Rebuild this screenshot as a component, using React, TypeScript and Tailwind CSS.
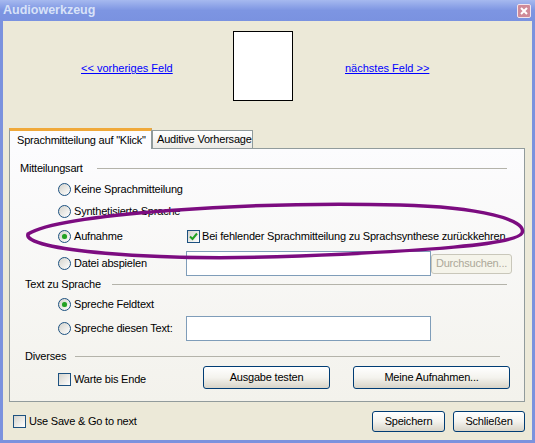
import React from "react";

const font = { fontFamily: '"Liberation Sans", Arial, sans-serif' };

function Radio({ checked }: { checked?: boolean }) {
  return (
    <span className="flex h-[13px] w-[13px] shrink-0 items-center justify-center rounded-full border border-[#1c5180] bg-linear-to-br from-[#d4d3cc] to-white">
      {checked && (
        <span className="h-[5px] w-[5px] rounded-full bg-[#22a022] shadow-[0_0_1px_#7ad27a]" />
      )}
    </span>
  );
}

function Checkbox({ checked }: { checked?: boolean }) {
  return (
    <span className="flex h-[13px] w-[13px] shrink-0 items-center justify-center border border-[#1c5180] bg-linear-to-br from-[#d4d3cc] to-white">
      {checked && (
        <svg width="9" height="9" viewBox="0 0 9 9">
          <path d="M1 4.5 L3.5 7 L8 1.5" fill="none" stroke="#21a121" strokeWidth="2" />
        </svg>
      )}
    </span>
  );
}

function Button({ label, className }: { label: string; className: string }) {
  return (
    <div
      className={`flex items-center justify-center rounded-[3px] border border-[#003c74] bg-linear-to-b from-white via-[#f4f3ee] to-[#d8d4c8] text-[11px] text-black ${className}`}
    >
      {label}
    </div>
  );
}

function GroupHeader({ label, labelClass, lineClass }: { label: string; labelClass: string; lineClass: string }) {
  return (
    <div className="flex items-center">
      <div className={`shrink-0 ${labelClass}`}>{label}</div>
      <div className={`h-px bg-[#b4b3aa] ${lineClass}`} />
    </div>
  );
}

export default function App() {
  return (
    <div
      className="relative h-[443px] w-[535px] overflow-hidden whitespace-nowrap bg-[#7b92de] text-[11px] tracking-[-0.2px] text-black"
      style={font}
    >
      {/* title bar */}
      <div className="flex h-[21px] items-center justify-between bg-linear-to-b from-[#a6b9ef] via-[#7d95e2] to-[#7a92e0] pl-[3px] pr-[4px]">
        <span className="text-[12.5px] font-bold tracking-[0px] text-[#d8e2f8]">Audiowerkzeug</span>
        <span className="flex h-[14px] w-[14px] items-center justify-center rounded-[2px] border border-[#f2e4ec] bg-[#cf8a98]">
          <svg width="8" height="8" viewBox="0 0 8 8">
            <path d="M1 1 L7 7 M7 1 L1 7" stroke="white" strokeWidth="2" />
          </svg>
        </span>
      </div>

      {/* client area */}
      <div className="mx-[3px] flex h-[419px] flex-col bg-[#ece9d8]">
        {/* navigation */}
        <div className="flex h-[107px] pt-[10px]">
          <div className="flex h-[70px] w-[230px] items-center pl-[78px] pt-[5px]">
            <span className="tracking-[0px] text-[#0000ff] underline">&lt;&lt; vorheriges Feld</span>
          </div>
          <div className="h-[70px] w-[60px] border border-black bg-white" />
          <div className="flex h-[70px] items-center pl-[52px] pt-[5px]">
            <span className="tracking-[0px] text-[#0000ff] underline">nächstes Feld &gt;&gt;</span>
          </div>
        </div>

        {/* tabs */}
        <div className="ml-[6px] flex h-[20px] items-end">
          <div className="relative z-10 -mb-px flex h-[21px] w-[143px] items-start border-x border-[#919b9c] border-t-[3px] border-t-[#f0a93a] bg-[#fcfcfe] pl-[7px] pt-[1px]">
            Sprachmitteilung auf "Klick"
          </div>
          <div className="flex h-[18px] w-[101px] items-center border border-b-0 border-[#919b9c] bg-linear-to-b from-white to-[#ecebe6] pl-[4px]">
            Auditive Vorhersage
          </div>
        </div>

        {/* panel */}
        <div className="ml-[6px] flex h-[254px] w-[516px] flex-col border border-[#919b9c] bg-linear-to-b from-[#fcfcfe] to-[#f3f2ec]">
          <div className="mt-[9px] flex h-[20px] items-center">
            <GroupHeader label="Mitteilungsart" labelClass="w-[77px] pl-[10px] box-content" lineClass="w-[410px]" />
          </div>

          <div className="flex h-[22px] items-center pl-[48px]">
            <Radio />
            <span className="ml-[3px]">Keine Sprachmitteilung</span>
          </div>
          <div className="flex h-[22px] items-center pl-[48px]">
            <Radio />
            <span className="ml-[3px]">Synthetisierte Sprache</span>
          </div>
          <div className="flex h-[28px] items-center pl-[48px]">
            <div className="flex w-[129px] items-center">
              <Radio checked />
              <span className="ml-[3px]">Aufnahme</span>
            </div>
            <Checkbox checked />
            <span className="ml-[2px]">Bei fehlender Sprachmitteilung zu Sprachsynthese zurückkehren</span>
          </div>
          <div className="flex h-[27px] items-center pl-[48px]">
            <div className="flex w-[128px] items-center">
              <Radio />
              <span className="ml-[3px]">Datei abspielen</span>
            </div>
            <div className="h-[25px] w-[245px] border border-[#7f9db9] bg-white" />
            <div className="flex h-[20px] w-[81px] items-center justify-center rounded-[3px] border border-[#c9c7ba] bg-[#f5f4ea] text-[#aca899]">
              Durchsuchen...
            </div>
          </div>

          <div className="flex h-[15px] items-center">
            <GroupHeader label="Text zu Sprache" labelClass="w-[87px] pl-[15px] box-content" lineClass="w-[395px]" />
          </div>
          <div className="flex h-[24px] items-center pl-[48px]">
            <Radio checked />
            <span className="ml-[3px]">Spreche Feldtext</span>
          </div>
          <div className="flex h-[24px] items-center pl-[48px]">
            <div className="flex w-[128px] items-center">
              <Radio />
              <span className="ml-[3px]">Spreche diesen Text:</span>
            </div>
            <div className="h-[25px] w-[245px] border border-[#7f9db9] bg-white" />
          </div>

          <div className="mt-[6px] flex h-[20px] items-center">
            <GroupHeader label="Diverses" labelClass="w-[50px] pl-[15px] box-content" lineClass="w-[425px]" />
          </div>
          <div className="flex h-[23px] items-center pl-[48px]">
            <div className="flex w-[145px] items-center pt-[3px]">
              <Checkbox />
              <span className="ml-[3px]">Warte bis Ende</span>
            </div>
            <Button label="Ausgabe testen" className="h-[23px] w-[127px]" />
            <Button label="Meine Aufnahmen..." className="ml-[23px] h-[23px] w-[157px]" />
          </div>
        </div>

        {/* footer */}
        <div className="mt-[9px] flex h-[21px] items-center pl-[10px] pr-[7px]">
          <Checkbox />
          <span className="ml-[3px]">Use Save &amp; Go to next</span>
          <Button label="Speichern" className="ml-auto h-[21px] w-[73px]" />
          <Button label="Schließen" className="ml-[8px] h-[21px] w-[72px]" />
        </div>
      </div>

      {/* hand-drawn highlight */}
      <svg className="pointer-events-none absolute inset-0" width="535" height="443" viewBox="0 0 535 443">
        <path
          d="M28 234 C 60 214, 250 201, 400 205 C 480 207, 528 220, 522 233 C 516 245, 420 251, 300 256 C 150 262, 22 250, 28 234 Z"
          fill="none"
          stroke="#7c0c80"
          strokeWidth="3.5"
        />
      </svg>
    </div>
  );
}
